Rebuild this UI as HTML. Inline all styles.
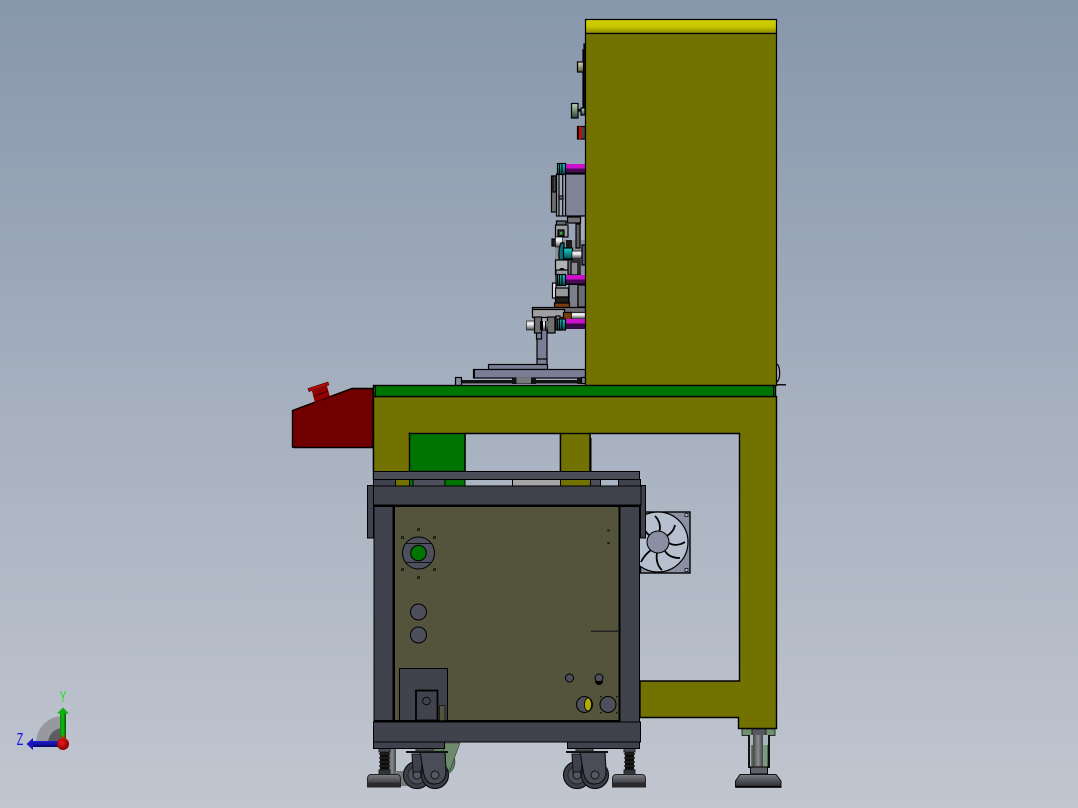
<!DOCTYPE html>
<html><head><meta charset="utf-8"><style>
html,body{margin:0;padding:0;width:1078px;height:808px;overflow:hidden}
svg{display:block}
</style></head><body>
<svg width="1078" height="808" viewBox="0 0 1078 808" xmlns="http://www.w3.org/2000/svg">
<defs>
<linearGradient id="bg" x1="0" y1="0" x2="0" y2="1"><stop offset="0" stop-color="#8797ac"/><stop offset="0.5" stop-color="#a6b0bf"/><stop offset="1" stop-color="#c1c6d0"/></linearGradient>
<linearGradient id="yel" x1="0" y1="0" x2="0" y2="1"><stop offset="0" stop-color="#d2d000"/><stop offset="0.5" stop-color="#c8c600"/><stop offset="1" stop-color="#8a8800"/></linearGradient>
<linearGradient id="cy" x1="0" y1="0" x2="0" y2="1"><stop offset="0" stop-color="#20d0d0"/><stop offset="1" stop-color="#044c4c"/></linearGradient>
<linearGradient id="sil" x1="0" y1="0" x2="0" y2="1"><stop offset="0" stop-color="#d0d3d8"/><stop offset="0.35" stop-color="#f4f4f4"/><stop offset="1" stop-color="#4a4a4a"/></linearGradient>
<linearGradient id="kn1" x1="0" y1="0" x2="0" y2="1"><stop offset="0" stop-color="#dcdbbc"/><stop offset="1" stop-color="#55553f"/></linearGradient>
<linearGradient id="kn2" x1="0" y1="0" x2="0" y2="1"><stop offset="0" stop-color="#bcdcbc"/><stop offset="1" stop-color="#2a4433"/></linearGradient>
<linearGradient id="foot" x1="0" y1="0" x2="0" y2="1"><stop offset="0" stop-color="#7d7f85"/><stop offset="0.45" stop-color="#55565c"/><stop offset="1" stop-color="#2a2a2c"/></linearGradient>
<linearGradient id="stud" x1="0" y1="0" x2="1" y2="0"><stop offset="0" stop-color="#444"/><stop offset="0.5" stop-color="#8a8c90"/><stop offset="1" stop-color="#444"/></linearGradient>
<linearGradient id="gAx" x1="0" y1="0" x2="1" y2="0"><stop offset="0" stop-color="#0a8a0a"/><stop offset="0.5" stop-color="#10c010"/><stop offset="1" stop-color="#065006"/></linearGradient>
<linearGradient id="bAx" x1="0" y1="0" x2="0" y2="1"><stop offset="0" stop-color="#2020d8"/><stop offset="1" stop-color="#06066a"/></linearGradient>
<radialGradient id="rd" cx="0.4" cy="0.4" r="0.6"><stop offset="0" stop-color="#f01818"/><stop offset="1" stop-color="#800"/></radialGradient>
<g id="caster">
<circle cx="-9" cy="0" r="13.5" fill="#3d3f49" stroke="#111" stroke-width="1.2"/>
<circle cx="-9" cy="0" r="9" fill="#4d4f5a" stroke="#222" stroke-width="1"/>
<circle cx="-9" cy="0" r="4" fill="#555762" stroke="#111" stroke-width="1"/>
<circle cx="9" cy="0" r="13.5" fill="#3a3c46" stroke="#111" stroke-width="1.2"/>
<path d="M-14,-21H-3L-5,-3H-13Z" fill="#3e404b" stroke="#111"/>
<path d="M-6,-23H19L20,-3C20,5 15,9 8,9C1,9 -2,3 -3,-5Z" fill="#4a4c58" stroke="#111" stroke-width="1.2"/>
<circle cx="9" cy="0" r="4" fill="#555762" stroke="#111" stroke-width="1"/>
<rect x="-20" y="-24" width="42" height="2" fill="#111"/>
<rect x="-10" y="-30" width="17" height="6" fill="#555" stroke="#222"/>
</g>
<g id="foot1">
<rect x="13" y="2" width="9" height="25" fill="#0c0c0c"/>
<path d="M12,6h11M12,10h11M12,14h11M12,18h11M12,22h11" stroke="#222" stroke-width="1.400"/>
<rect x="12" y="-1" width="11" height="5" fill="#4a4c55" stroke="#222"/>
<rect x="12" y="22" width="11" height="5" fill="#33353c" stroke="#222"/>
<path d="M4,26.500H30C32,26.500 33.500,28 33.500,31V39H0.500V31C0.500,28 2,26.500 4,26.500Z" fill="url(#foot)" stroke="#222"/>
<rect x="0.500" y="34.500" width="33" height="4.500" fill="#2a2a2c"/>
</g>
</defs>
<rect width="1078" height="808" fill="url(#bg)"/>

<!-- left-side mechanisms behind cabinet -->
<g stroke="#000" stroke-width="1.200">
<rect x="583" y="50" width="3" height="60" fill="#222"/>
<rect x="584" y="44" width="2" height="66" fill="#222"/>
<rect x="577.500" y="62" width="6" height="10" fill="url(#kn1)"/>
<rect x="571.500" y="103.500" width="6.500" height="14.500" fill="url(#kn2)"/>
<rect x="578" y="109.500" width="3" height="1.500" fill="#889"/>
<rect x="581" y="108" width="4" height="7" fill="url(#kn2)"/>
<rect x="577.500" y="126.500" width="8" height="12.500" fill="#444"/>
<rect x="579" y="126.500" width="2.500" height="12.500" fill="#e00000" stroke="none"/>
<rect x="577" y="126.500" width="2" height="12.500" fill="#000" stroke="none"/>

<!-- upper cylinder -->
<rect x="565.500" y="174" width="20" height="42" fill="#7f8499"/>
<rect x="556.500" y="174" width="9" height="42" fill="#a2aaba"/>
<line x1="559" y1="174" x2="559" y2="216"/>
<line x1="562.700" y1="174" x2="562.700" y2="216"/>
<rect x="559" y="196" width="4" height="3" fill="#778"/>
<rect x="551.500" y="176" width="5" height="36" fill="#6e6e70"/>
<rect x="553" y="176" width="3" height="16" fill="#4e4e50"/>
<rect x="565.500" y="164" width="20" height="4.500" fill="#cc10cc" stroke="none"/>
<rect x="565.500" y="168.500" width="20" height="4" fill="#4a0a58" stroke="none"/>
<rect x="565.500" y="172.500" width="20" height="2" fill="#000" stroke="none"/>
<rect x="557.500" y="163.500" width="8" height="11" fill="url(#cy)"/>
<path d="M559.500,163.500v11M562,163.500v11" stroke="#000"/>

<!-- mid mechanism -->
<rect x="580" y="216" width="5.500" height="30" fill="#a8acb6"/>
<rect x="567.500" y="217" width="13" height="6" fill="#6f7072"/>
<rect x="555" y="240" width="30" height="35" fill="#8a8d96" stroke="none"/>
<rect x="576" y="224" width="4" height="24" fill="#5c5e66"/>
<rect x="556.500" y="221" width="9.500" height="8" fill="#666870"/>
<rect x="555.500" y="225" width="12.500" height="12" fill="#9c9ea5"/>
<rect x="558" y="230" width="6" height="6" fill="#333"/>
<rect x="560" y="232" width="2.500" height="2.500" fill="#3a3" stroke="none"/>
<rect x="552" y="239" width="5" height="7" fill="#222"/>
<rect x="555.500" y="237" width="7" height="10" fill="url(#sil)" stroke-width="0.600"/>
<rect x="566" y="240" width="6" height="8" fill="#1a1a1a" stroke="none"/>
<path d="M561,243C558,250 558,260 562,267H564V243Z" fill="#087078" stroke="#000"/>
<rect x="563.500" y="248" width="9" height="11" fill="url(#cy)"/>
<rect x="572" y="251" width="10" height="7.500" fill="url(#sil)" stroke-width="0.600"/>
<rect x="555.500" y="260" width="13" height="15" fill="#b0b2b8"/>
<rect x="568" y="260" width="12" height="15" fill="#6a6c72"/>
<rect x="571" y="262" width="7" height="13" fill="#888a8e"/>
<circle cx="562" cy="271" r="2.500" fill="#333"/>
<rect x="582" y="245" width="3.500" height="20" fill="#5a5c64"/>

<!-- lower cylinder blocks -->
<rect x="569" y="275" width="9" height="35" fill="#7c7e88"/>
<rect x="578" y="285" width="7.500" height="22" fill="#6a6c74"/>
<rect x="556" y="270" width="12" height="14" fill="#9a9ca2"/>
<rect x="552.500" y="283" width="3.500" height="15" fill="#eee"/>
<rect x="555.500" y="288" width="13" height="9" fill="#98999c"/>
<rect x="555.500" y="297" width="13" height="6" fill="#1e1e1e"/>
<rect x="554.500" y="303" width="15" height="4.500" fill="#7c3c10"/>
<rect x="565.500" y="275" width="20" height="4.500" fill="#cc10cc" stroke="none"/>
<rect x="565.500" y="279.500" width="20" height="4" fill="#4a0a58" stroke="none"/>
<rect x="565.500" y="283.500" width="20" height="1.500" fill="#000" stroke="none"/>
<rect x="557.500" y="274.500" width="8" height="11" fill="url(#cy)"/>
<path d="M559.500,274.500v11M562,274.500v11" stroke="#000"/>

<!-- lower assembly -->
<rect x="537" y="330" width="10" height="34.500" fill="#7a7d96"/>
<line x1="537" y1="359" x2="547" y2="359"/>
<rect x="536.500" y="332" width="5" height="7" fill="#7a7d96"/>
<rect x="488.500" y="364.500" width="59" height="5" fill="#7a7d96"/>
<rect x="473.500" y="369.500" width="112" height="8.500" fill="#7a7d96"/>
<rect x="473" y="369.500" width="2" height="8.500" fill="#000" stroke="none"/>
<rect x="461" y="380" width="124" height="3.500" fill="#111" stroke="none"/>
<rect x="512" y="378" width="24" height="6" fill="#111" stroke="none"/>
<rect x="516.500" y="377.500" width="14.500" height="6" fill="#77787c" stroke="none"/>
<rect x="577" y="378" width="5" height="6" fill="#111" stroke="none"/>
<rect x="581.500" y="377.500" width="4" height="6" fill="#7a7d96"/>
<rect x="455.500" y="377.500" width="6" height="8" fill="#8488a0"/>
<rect x="532.500" y="307.500" width="53" height="5" fill="#6c6d72"/>
<rect x="532.500" y="309.500" width="32" height="8" fill="#a0a0a2"/>
<rect x="526.500" y="321" width="8" height="9" fill="url(#sil)" stroke-width="0.600"/>
<rect x="534.500" y="317" width="7" height="16" fill="#6f7072"/>
<rect x="547.500" y="317" width="7.500" height="16" fill="#6f7072"/>
<rect x="541" y="321" width="6.500" height="9" fill="url(#sil)" stroke="none"/>
<rect x="540" y="321" width="3" height="9" fill="#000" stroke="none"/>
<rect x="545" y="321" width="1.500" height="9" fill="#000" stroke="none"/>
<rect x="556" y="316" width="4" height="14" fill="#8e9096"/>
<rect x="563.500" y="312.500" width="8" height="7.500" fill="#7c3c10"/>
<rect x="571.500" y="312.500" width="14" height="6.500" fill="url(#sil)" stroke-width="0.600"/>
<rect x="565.500" y="319" width="20" height="4.500" fill="#cc10cc" stroke="none"/>
<rect x="565.500" y="323.500" width="20" height="5.500" fill="#350a45" stroke="none"/>
<rect x="557.500" y="319" width="8" height="11" fill="url(#cy)"/>
<path d="M559.500,319v11M562,319v11" stroke="#000"/>
</g>

<!-- small bracket on the right -->
<path d="M777,364C780,366 781,378 777,382" fill="#aab" stroke="#000" stroke-width="1.200"/>
<rect x="776" y="384" width="10" height="1.500" fill="#111"/>

<!-- cabinet -->
<rect x="585.500" y="19.500" width="191" height="14" fill="url(#yel)" stroke="#000" stroke-width="1.200"/>
<rect x="585.500" y="33.500" width="191" height="352" fill="#727200" stroke="#000" stroke-width="1.200"/>

<!-- table -->
<path d="M373.500,396.500H776.500V728.500H738.500V717.500H640V681H739.500V433.500H590V471H560.500V433.500H465V471H409.500V433.500H409V471H373.500Z" fill="#727200" stroke="#000" stroke-width="1.400"/>
<rect x="373.500" y="433.500" width="35.500" height="47" fill="#727200"/>
<line x1="373.500" y1="433" x2="373.500" y2="480" stroke="#000" stroke-width="1.400"/>
<rect x="409.500" y="433.500" width="55.500" height="38" fill="#007400" stroke="#000" stroke-width="1.400"/>
<rect x="560.500" y="433.500" width="29.500" height="47" fill="#727200" stroke="#000" stroke-width="1.400"/>
<rect x="590" y="438" width="1.500" height="33" fill="#000"/>
<rect x="373.500" y="385.500" width="402" height="11" fill="#007400" stroke="#000" stroke-width="1.400"/>
<line x1="375.500" y1="386" x2="375.500" y2="396" stroke="#000"/>
<line x1="773.500" y1="386" x2="773.500" y2="396" stroke="#000"/>

<!-- red box -->
<path d="M292.500,410.500L352,388.500H373V447.500H294V447H292.500Z" fill="#700000" stroke="#000" stroke-width="1.400"/>
<path d="M312,391L327,386L330,397L315,403Z" fill="#920000"/>
<path d="M313.500,396.500L328,391" stroke="#200" stroke-width="0.800"/>
<path d="M316,402L330,396.500" stroke="#200" stroke-width="0.800"/>
<path d="M308,388.500L328,382L328.800,385L309,391.500Z" fill="#b80808" stroke="#300" stroke-width="0.600"/>

<!-- frame -->
<g stroke="#000" stroke-width="1">
<rect x="373.500" y="479" width="22" height="7" fill="#40434e"/>
<rect x="395.500" y="479" width="14" height="7" fill="#727200"/>
<rect x="409.500" y="479" width="4" height="7" fill="#007400"/>
<rect x="413" y="479" width="32" height="7" fill="#4d505c"/>
<rect x="445" y="479" width="20" height="7" fill="#007400"/>
<rect x="512.500" y="479.500" width="48" height="6.500" fill="#a6a6a6"/>
<rect x="560.500" y="479.500" width="30" height="6.500" fill="#727200"/>
<rect x="590.500" y="479.500" width="10" height="6.500" fill="#4a4d58"/>
<rect x="618.500" y="479.500" width="22" height="6.500" fill="#40434e"/>
<rect x="373.500" y="471.500" width="266" height="8" fill="#4a4d58"/>
</g>

<!-- fan -->
<rect x="640.500" y="512" width="49.500" height="61" fill="#8a8fa3" stroke="#000" stroke-width="1.400"/>
<circle cx="658" cy="542" r="30" fill="#b7c0cf" stroke="#000" stroke-width="1.200"/>
<g fill="none" stroke="#000" stroke-width="1.800">
<path d="M655,516C660,521 661,528 659,532"/>
<path d="M675,525C674,531 670,534 667,536"/>
<path d="M685,542C680,545 674,546 669,543"/>
<path d="M680,558C674,558 668,556 665,551"/>
<path d="M662,570C657,566 656,558 657,553"/>
<path d="M641,562C645,554 650,551 651,550"/>
<path d="M640,525C645,530 647,534 649,535"/>
</g>
<circle cx="658" cy="542" r="11" fill="#8a8fa3" stroke="#000" stroke-width="1"/>
<rect x="685" y="513.500" width="3" height="3" fill="#b7c0cf" stroke="#000" stroke-width="0.700"/>
<rect x="685" y="568.500" width="3" height="3" fill="#b7c0cf" stroke="#000" stroke-width="0.700"/>
<rect x="640.500" y="485.500" width="5" height="52.500" fill="#40434e" stroke="#000"/>
<rect x="367.500" y="485.500" width="6" height="52.500" fill="#40434e" stroke="#000"/>

<!-- casters and feet (behind frame) -->
<circle cx="441" cy="762" r="14" fill="#5e8060" stroke="#222" stroke-width="0.500"/>
<path d="M445,743H460L450,770H440Z" fill="#6c8a6c" stroke="#222" stroke-width="0.500"/>
<rect x="388" y="748" width="8" height="26" fill="url(#stud)"/>
<rect x="395" y="771" width="25" height="15" fill="#777"/>
<use href="#foot1" x="367" y="748"/>
<use href="#caster" x="426" y="775"/>
<use href="#caster" x="586" y="775"/>
<use href="#foot1" x="612" y="748"/>

<!-- right leveling foot -->
<rect x="742" y="729" width="33" height="6.500" fill="#6f9070" stroke="#111" stroke-width="0.800"/>
<rect x="752" y="729" width="14" height="6.500" fill="#55585e" stroke="#111" stroke-width="0.800"/>
<rect x="749" y="735" width="20" height="33" fill="#a9b4ba"/>
<path d="M749,735V768M769,735V768" stroke="#000" stroke-width="1.800"/>
<path d="M752,745V767H768V745" fill="#7c9a7e" stroke="#111" stroke-width="0.800"/>
<rect x="753" y="735" width="10" height="33" fill="url(#stud)"/>
<rect x="750.500" y="767" width="17" height="7" fill="#5f6168" stroke="#000"/>
<path d="M740,774.500H776L781,781V787H735.500V781Z" fill="url(#foot)" stroke="#111"/>
<rect x="735.500" y="786" width="46" height="1.800" fill="#000"/>

<!-- panel -->
<rect x="394.500" y="506.500" width="225" height="214" fill="#54533b" stroke="#000" stroke-width="1"/>
<rect x="374" y="505" width="19" height="217" fill="#40434e" stroke="#000" stroke-width="1"/>
<rect x="620" y="506" width="19.500" height="216" fill="#40434e" stroke="#000" stroke-width="1"/>
<rect x="618.500" y="506" width="1.500" height="215" fill="#000"/>
<rect x="393" y="505" width="1.500" height="216" fill="#000"/>
<rect x="373.500" y="486" width="267.500" height="19" fill="#40434e" stroke="#000" stroke-width="1"/>
<rect x="373.500" y="505" width="267" height="2" fill="#000"/>
<rect x="373.500" y="722" width="267" height="20" fill="#40434e" stroke="#000" stroke-width="1"/>
<rect x="373.500" y="720" width="246" height="2" fill="#000"/>
<rect x="373.500" y="742" width="71" height="6.500" fill="#40434e" stroke="#000" stroke-width="1"/>
<rect x="567.500" y="742" width="72" height="6.500" fill="#40434e" stroke="#000" stroke-width="1"/>

<!-- panel details -->
<circle cx="418.500" cy="553" r="16" fill="#4d505c" stroke="#000" stroke-width="1"/>
<path d="M406,543.500H431M406,562.500H431" stroke="#111" stroke-width="1"/>
<circle cx="418.500" cy="553" r="7.800" fill="#007400" stroke="#000" stroke-width="1"/>
<g fill="#3a6a3a" stroke="#000" stroke-width="0.700">
<circle cx="418.500" cy="529.500" r="1.200"/><circle cx="402.500" cy="537.500" r="1.200"/><circle cx="434.500" cy="537.500" r="1.200"/>
<circle cx="402.500" cy="569.500" r="1.200"/><circle cx="434.500" cy="569.500" r="1.200"/><circle cx="418.500" cy="577.500" r="1.200"/>
<circle cx="608.500" cy="530.500" r="0.800"/><circle cx="608.500" cy="543" r="0.800"/>
</g>
<circle cx="418.500" cy="612" r="8" fill="#4d505c" stroke="#000" stroke-width="1"/>
<circle cx="418.500" cy="635" r="8" fill="#4d505c" stroke="#000" stroke-width="1"/>
<rect x="591" y="630.500" width="28" height="1.500" fill="#222"/>
<rect x="399.500" y="668.500" width="48" height="52" fill="#40434e" stroke="#000" stroke-width="1"/>
<rect x="416" y="690.500" width="21.500" height="30" fill="#40434e" stroke="#000" stroke-width="1.800"/>
<circle cx="426.500" cy="701" r="3.800" fill="#40434e" stroke="#000" stroke-width="0.800"/>
<rect x="439.500" y="705.500" width="5.500" height="15" fill="#54533b" stroke="#111" stroke-width="0.800"/>
<circle cx="569.500" cy="678" r="4" fill="#4d505c" stroke="#000" stroke-width="1"/>
<circle cx="599" cy="678" r="4" fill="#4d505c" stroke="#000" stroke-width="1"/>
<path d="M595,681A4,4 0 0 0 603,681" fill="#000"/>
<circle cx="584.500" cy="704.500" r="8" fill="#4d505c" stroke="#000" stroke-width="1"/>
<ellipse cx="588" cy="704.500" rx="3.500" ry="6.500" fill="#b0ae00" stroke="#000" stroke-width="0.800"/>
<circle cx="608" cy="704.500" r="8" fill="#4d505c" stroke="#000" stroke-width="1"/>
<g fill="#111"><rect x="600" y="696" width="1.500" height="1.500"/><rect x="616" y="696" width="1.500" height="1.500"/><rect x="600" y="712" width="1.500" height="1.500"/><rect x="616" y="712" width="1.500" height="1.500"/></g>

<!-- triad -->
<path d="M63,743H36A27,27 0 0 1 63,716Z" fill="#98999e"/>
<path d="M63,743H48A15,15 0 0 1 63,728Z" fill="#5c5d62"/>
<rect x="60" y="713" width="6" height="30" fill="url(#gAx)"/>
<path d="M57,713.500L63,707.500L69,713.500Z" fill="#10b010"/>
<rect x="33" y="741" width="30" height="6" fill="url(#bAx)"/>
<path d="M33,738L26.500,744L33,750Z" fill="#1818c0"/>
<circle cx="63" cy="744" r="6" fill="url(#rd)"/>
<path d="M60,735L66,741M66,735L60,741" stroke="#e01010" stroke-width="0.900"/>
<text transform="translate(63 702) scale(0.6 1)" font-family="'Liberation Sans',sans-serif" font-size="16" fill="#20e020" text-anchor="middle">Y</text>
<text transform="translate(20 745) scale(0.6 1)" font-family="'Liberation Sans',sans-serif" font-size="18" fill="#1818e0" text-anchor="middle">Z</text>
</svg>
</body></html>
